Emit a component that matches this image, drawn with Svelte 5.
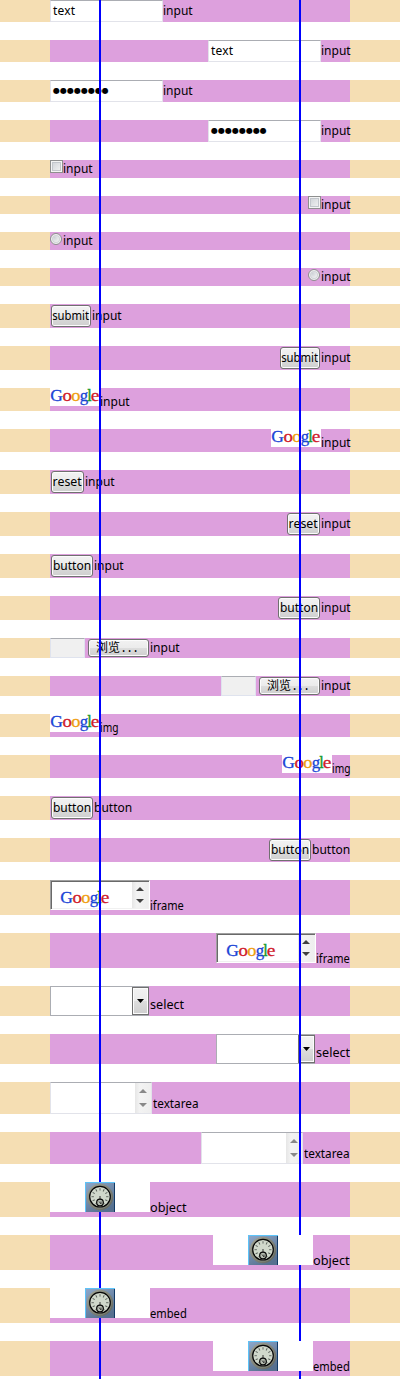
<script>
  const base = [
    { kind: 'text', label: 'input', h: 22, base: 15, lw: 29, sx: 1 },
    { kind: 'password', label: 'input', h: 22, base: 15, lw: 29, sx: 1 },
    { kind: 'checkbox', label: 'input', h: 18, base: 13, lw: 29, sx: 1 },
    { kind: 'radio', label: 'input', h: 18, base: 13, lw: 29, sx: 1 },
    { kind: 'button', caption: 'submit', w: 40, cx: 0.94, h: 24, label: 'input', base: 16, lw: 29, sx: 1 },
    { kind: 'image', label: 'input', h: 23, base: 18, lw: 29, sx: 1 },
    { kind: 'button', caption: 'reset', w: 33, cx: 1.03, h: 24, label: 'input', base: 16, lw: 29, sx: 1 },
    { kind: 'button', caption: 'button', w: 42, cx: 1, h: 24, label: 'input', base: 16, lw: 29, sx: 1 },
    { kind: 'file', label: 'input', h: 20, base: 14, lw: 29, sx: 1 },
    { kind: 'image', label: 'img', h: 23, base: 18, lw: 18, sx: 0.85 },
    { kind: 'button', caption: 'button', w: 42, cx: 1, h: 24, label: 'button', base: 16, lw: 38, sx: 1 },
    { kind: 'iframe', label: 'iframe', h: 35, base: 30, lw: 34, sx: 0.92 },
    { kind: 'select', label: 'select', h: 30, base: 23, lw: 34, sx: 1.05 },
    { kind: 'textarea', label: 'textarea', h: 32, base: 26, lw: 46, sx: 0.98 },
    { kind: 'object', label: 'object', h: 35, base: 30, lw: 37, sx: 1.06 },
    { kind: 'object', label: 'embed', h: 35, base: 30, lw: 37, sx: 0.93 }
  ];
  const rows = base.flatMap((r) => [{ ...r, right: false }, { ...r, right: true }]);
  const ticks = Array.from({ length: 11 }, (_, i) => -150 + i * 30);
</script>

{#snippet logo()}
  <svg class="logo" width="50" height="18" viewBox="0 0 50 18">
    <rect width="50" height="18" fill="#fff" />
    <g font-family="'Liberation Serif', serif" font-size="17" stroke-width="0.3">
      <text x="0.2" y="13" fill="#1a45d6" stroke="#1a45d6" textLength="12.6" lengthAdjust="spacingAndGlyphs">G</text>
      <text x="12.4" y="13" fill="#d01c2c" stroke="#d01c2c" textLength="9.4" lengthAdjust="spacingAndGlyphs">o</text>
      <text x="21.3" y="13" fill="#efa012" stroke="#efa012" textLength="9.2" lengthAdjust="spacingAndGlyphs">o</text>
      <text x="29.8" y="13" fill="#1a45d6" stroke="#1a45d6" textLength="8.4" lengthAdjust="spacingAndGlyphs">g</text>
      <text x="37.4" y="13" fill="#159a2c" stroke="#159a2c" stroke-width="0.6" textLength="4" lengthAdjust="spacingAndGlyphs">l</text>
      <text x="40.7" y="13" fill="#d01c2c" stroke="#d01c2c" textLength="8.6" lengthAdjust="spacingAndGlyphs">e</text>
    </g>
  </svg>
{/snippet}

{#snippet arrows()}
  <svg width="8" height="4" viewBox="0 0 8 4"><path d="M0 4 4 0 8 4Z" fill="currentColor" /></svg>
  <svg width="8" height="4" viewBox="0 0 8 4"><path d="M0 0 4 4 8 0Z" fill="currentColor" /></svg>
{/snippet}

{#snippet clock()}
  <svg width="30" height="30" viewBox="0 0 30 30">
    <defs>
      <linearGradient id="plate" x1="0" y1="0" x2="0.6" y2="1">
        <stop offset="0" stop-color="#8fa9cc" />
        <stop offset="1" stop-color="#56708f" />
      </linearGradient>
      <linearGradient id="rim" x1="0" y1="0" x2="1" y2="1">
        <stop offset="0" stop-color="#a4a79a" />
        <stop offset="1" stop-color="#5c6058" />
      </linearGradient>
    </defs>
    <rect width="30" height="30" fill="url(#plate)" />
    <path d="M0.5 30V0.5H30" fill="none" stroke="#5cc4fa" />
    <path d="M29.5 1V30" stroke="#123a66" />
    <circle cx="15" cy="15" r="13.2" fill="url(#rim)" />
    <circle cx="15" cy="15" r="11.6" fill="#85897c" />
    <circle cx="15" cy="14.7" r="10.3" fill="#d0d8cb" stroke="#050505" stroke-width="1.2" />
    <g stroke="#59605a" stroke-width="0.9">
      {#each ticks as a}
        <path d="M15 6.2V8.6" transform="rotate({a} 15 14.7)" />
      {/each}
    </g>
    <path d="M15 14V18" stroke="#333" />
    <circle cx="15" cy="20.5" r="3.3" fill="#b7beb2" stroke="#050505" stroke-width="1.2" />
    <path d="M14 19.5 16 22M16 19.5V22" stroke="#222" stroke-width="0.8" />
  </svg>
{/snippet}

<main class="page">
  {#each rows as r}
    <section class="row" class:right={r.right} style:height="{r.h}px">
      <div class="inner">
        {#if r.kind === 'text'}
          <div class="field"><span>text</span></div>
        {:else if r.kind === 'password'}
          <div class="field"><span class="dots">●●●●●●●●</span></div>
        {:else if r.kind === 'checkbox'}
          <div class="check"></div>
        {:else if r.kind === 'radio'}
          <div class="radio"></div>
        {:else if r.kind === 'button'}
          <div class="btn" style:width="{r.w}px"><span style:transform="scaleX({r.cx})">{r.caption}</span></div>
        {:else if r.kind === 'image'}
          {@render logo()}
        {:else if r.kind === 'file'}
          <div class="file">
            <div class="filename"></div>
            <div class="btn browse"><span>浏览<i>...</i></span></div>
          </div>
        {:else if r.kind === 'iframe'}
          <div class="frame">
            <div class="view">{@render logo()}</div>
            <div class="scroll">{@render arrows()}</div>
          </div>
        {:else if r.kind === 'select'}
          <div class="select">
            <div class="drop"><svg width="7" height="4" viewBox="0 0 7 4"><path d="M0 0H7L3.5 4Z" /></svg></div>
          </div>
        {:else if r.kind === 'textarea'}
          <div class="area"><div class="scroll">{@render arrows()}</div></div>
        {:else}
          <div class="object">{@render clock()}</div>
        {/if}
        <span
          class="label"
          style:width="{r.lw}px"
          style:margin-top="{r.base - 12}px"
          style:transform="scaleX({r.sx})">{r.label}</span>
      </div>
    </section>
  {/each}
  <div class="guide first"></div>
  <div class="guide second"></div>
</main>

<style>
  :global(body) { margin: 0; background: #fff; }
  .page {
    position: relative;
    display: flex;
    flex-direction: column;
    gap: 18px;
    width: 400px;
    height: 1379px;
    font: 12px/16px 'Noto Sans', sans-serif;
    color: #000;
  }
  .page * { box-sizing: border-box; }
  .row { flex: none; padding: 0 50px; background: #f5deb3; }
  .inner { display: flex; align-items: flex-start; height: 100%; background: #dda0dd; }
  .inner > * { flex: none; }
  .right .inner { justify-content: flex-end; }
  .label { display: block; height: 16px; white-space: nowrap; transform-origin: 0 50%; }
  svg { display: block; overflow: visible; }
  .field {
    width: 113px;
    height: 22px;
    padding: 2px 0 0 2px;
    background: #fff;
    border: 1px solid #e2e3ea;
    border-top-color: #abadb3;
    border-radius: 1px;
  }
  .field span { display: block; letter-spacing: 0.15px; }
  .field .dots { font: 8px/16px 'DejaVu Sans', sans-serif; letter-spacing: 0; }
  .check {
    width: 13px;
    height: 13px;
    border: 1px solid #8e8f8f;
    background: linear-gradient(135deg, #cbcfd5, #f6f6f6);
    box-shadow: inset 0 0 0 1px #f4f4f4, inset 0 0 0 2px #c2c6cc;
  }
  .radio {
    width: 12px;
    height: 12px;
    margin: 1px 1px 0 0;
    border: 1px solid #8e8f8f;
    border-radius: 50%;
    background: radial-gradient(circle at 35% 35%, #cfd3d8, #f6f6f6 70%);
    box-shadow: inset 0 0 0 1px #f4f4f4, inset 0 0 0 2px #d0d3d7;
  }
  .btn {
    height: 22px;
    margin: 1px;
    border: 1px solid #707070;
    border-radius: 3px;
    background: linear-gradient(#f2f2f2 0, #ebebeb 50%, #dddddd 50%, #cfcfcf 100%);
    box-shadow: inset 0 0 0 1px #fcfcfc;
    display: flex;
    justify-content: center;
    white-space: nowrap;
    padding-top: 2px;
  }
  .file { display: flex; justify-content: space-between; width: 100px; height: 20px; }
  .filename { width: 35px; height: 20px; background: #f0f0f0; border: 1px solid #dfe3ee; border-top-color: #abadb3; }
  .browse { width: 61px; height: 18px; justify-content: flex-start; padding: 0 0 0 7px; }
  .browse span { font: 12px/14px 'Noto Sans CJK SC', sans-serif; }
  .browse i { font: 12px/14px 'Liberation Mono', monospace; letter-spacing: -1.2px; }
  .frame {
    display: flex;
    width: 100px;
    height: 30px;
    border: 1px solid;
    border-color: #a0a0a0 #fff #fff #a0a0a0;
    background: #fff;
    box-shadow: inset 1px 1px 0 #696969, inset -1px -1px 0 #f0f0f0;
  }
  .view { width: 81px; height: 28px; padding: 9px 0 0 9px; }
  .scroll {
    display: flex;
    flex-direction: column;
    align-items: center;
    justify-content: space-between;
    width: 16px;
    background: linear-gradient(90deg, #e6e6e6, #f3f3f3 30%, #eeeeee);
  }
  .frame .scroll { height: 26px; margin-top: 1px; padding: 5px 0; color: #404040; }
  .select {
    display: flex;
    justify-content: flex-end;
    width: 99px;
    height: 30px;
    margin-right: 1px;
    border: 1px solid #abadb3;
    border-right: 0;
    background: #fff;
  }
  .drop {
    display: flex;
    align-items: center;
    justify-content: center;
    width: 17px;
    height: 28px;
    border: 1px solid #707070;
    background: linear-gradient(#f2f2f2 0, #ebebeb 50%, #dddddd 50%, #cfcfcf 100%);
    box-shadow: inset 0 0 0 1px #fcfcfc;
  }
  .area {
    display: flex;
    justify-content: flex-end;
    width: 102px;
    height: 32px;
    margin-right: 1px;
    border: 1px solid #e2e3ea;
    border-top-color: #abadb3;
    background: #fff;
  }
  .area .scroll { height: 30px; padding: 6px 0; color: #888; }
  .object {
    position: relative;
    z-index: 3;
    display: flex;
    justify-content: center;
    width: 100px;
    height: 30px;
    background: #fff;
  }
  .guide { position: absolute; top: 0; bottom: 0; z-index: 2; width: 2px; background: #00f; }
  .first { left: 99px; }
  .second { left: 299px; }
</style>
